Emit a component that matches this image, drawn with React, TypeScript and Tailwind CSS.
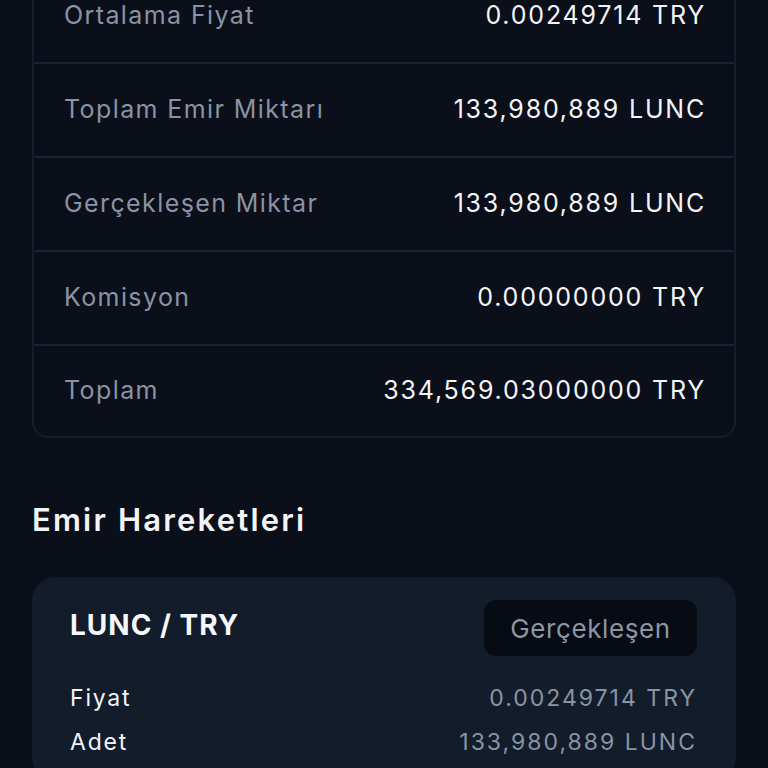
const summary = [
  { label: 'Ortalama Fiyat', value: '0.00249714 TRY' },
  { label: 'Toplam Emir Miktarı', value: '133,980,889 LUNC' },
  { label: 'Gerçekleşen Miktar', value: '133,980,889 LUNC' },
  { label: 'Komisyon', value: '0.00000000 TRY' },
  { label: 'Toplam', value: '334,569.03000000 TRY' },
]

const App = () => {
  return (
    <div className="h-[768px] w-full overflow-hidden bg-[#0b0f19] font-['Inter',sans-serif] px-8">
      {/* Order summary */}
      <div className="-mt-[32px] rounded-2xl border-2 border-[#161e2b] overflow-hidden">
        {summary.map((row, i) => {
          const last = i === summary.length - 1
          return (
            <div
              key={row.label}
              className={`flex items-center justify-between pl-[30px] pr-[28px] ${last ? 'h-[90px]' : 'h-[94px] border-b-2 border-[#1a2331]'}`}
            >
              <span className="text-[25px] tracking-[1.4px] text-[#8a93a3]">{row.label}</span>
              <span className="text-[25px] tracking-[1.8px] text-[#f3f5f8]">{row.value}</span>
            </div>
          )
        })}
      </div>

      <h2 className="mt-[66px] text-[31px] font-semibold leading-none tracking-[2.2px] text-[#f2f4f7]">Emir Hareketleri</h2>

      {/* Trade card */}
      <div className="mt-[42px] rounded-3xl bg-[#131c2a] pl-[38px] pr-[39px] pt-[23px] pb-6">
        <div className="flex items-center justify-between">
          <span className="mb-[6px] text-[28px] font-bold tracking-[1px] text-[#f5f7fa]">LUNC / TRY</span>
          <span className="flex h-[56px] w-[213px] items-center justify-center rounded-xl bg-[#070b13] text-[26px] tracking-[0.6px] text-[#8d95a5]">
            Gerçekleşen
          </span>
        </div>
        <div className="mt-[28px] flex flex-col gap-[16px]">
          <div className="flex h-[28px] items-center justify-between text-[23px]">
            <span className="tracking-[1.8px] text-[#f3f5f8]">Fiyat</span>
            <span className="tracking-[2px] text-[#8a93a3]">0.00249714 TRY</span>
          </div>
          <div className="flex h-[28px] items-center justify-between text-[23px]">
            <span className="tracking-[1.8px] text-[#f3f5f8]">Adet</span>
            <span className="tracking-[2px] text-[#8a93a3]">133,980,889 LUNC</span>
          </div>
        </div>
      </div>
    </div>
  )
}

export default App
